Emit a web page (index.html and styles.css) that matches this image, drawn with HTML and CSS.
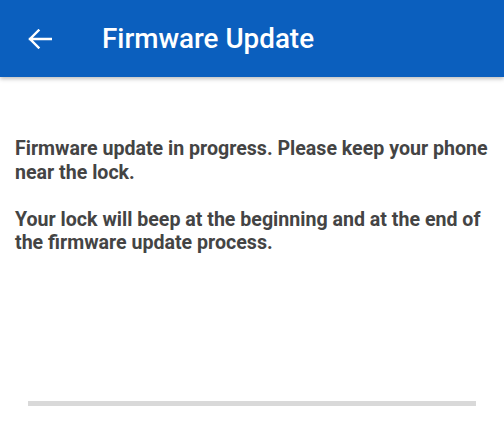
FILE: index.html
```html
<!DOCTYPE html>
<html>
<head>
<meta charset="utf-8">
<link rel="stylesheet" href="styles.css">
</head>
<body>
<div class="app">
  <header class="appbar">
    <button class="back" aria-label="Back">
      <svg width="24" height="20" viewBox="0 0 24 20"><path d="M23 10H2M10.5 1.5L2 10l8.5 8.5" fill="none" stroke="#fff" stroke-width="2.4" stroke-linecap="square"/></svg>
    </button>
    <h1 class="title">Firmware Update</h1>
  </header>
  <main class="content">
    <p class="msg">Firmware update in progress. Please keep your phone near the lock.</p>
    <p class="msg">Your lock will beep at the beginning and at the end of the firmware update process.</p>
  </main>
  <div class="progress"><div class="progress-fill" style="width:0%"></div></div>
</div>
</body>
</html>
```
FILE: styles.css
```css
html, body { margin: 0; padding: 0; background: #fff; }
body { font-family: Roboto, "Noto Sans", sans-serif; width: 504px; height: 424px; overflow: hidden; }
.app { display: flex; flex-direction: column; height: 424px; }
.appbar {
  height: 77px; background: #0b5fbe; display: flex; align-items: center;
  box-shadow: 0 2px 4px rgba(0,0,0,0.25); flex-shrink: 0;
}
.back { background: none; border: 0; padding: 0; margin: 0 0 0 28px; width: 24px; height: 20px; display: flex; }
.title { margin: 0 0 0 50px; color: #fff; font-size: 27.8px; font-weight: 500; }
.content { padding: 60px 10px 0 15px; flex: 1; }
.msg { margin: 0 0 23.5px; font-size: 19.6px; line-height: 23.5px; font-weight: 700; color: #444; }
.progress { height: 5px; background: #d9d9d9; margin: 0 28px 18px; }
.progress-fill { height: 100%; background: #0b5fbe; }
```
